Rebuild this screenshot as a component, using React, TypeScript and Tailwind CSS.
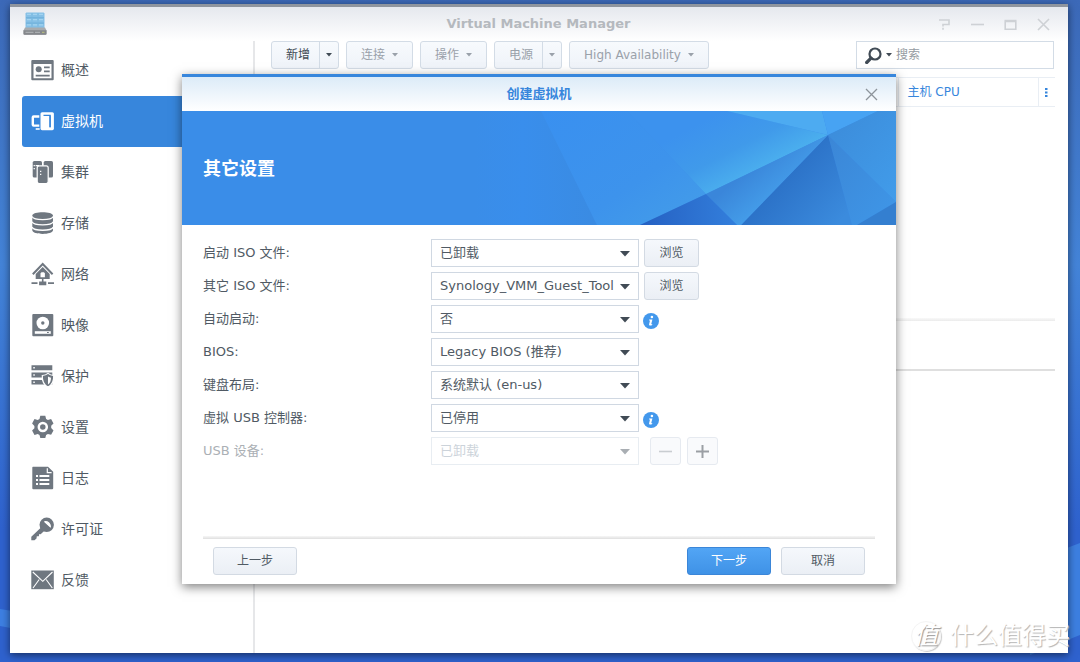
import React from 'react';

interface NavItem {
  label: string;
  icon: React.ReactNode;
  active?: boolean;
}

interface FieldProps {
  id: string;
  label: string;
  options: string[];
  disabled?: boolean;
  children?: React.ReactNode;
}

const Glyph = ({ children }: { children: React.ReactNode }) => (
  <svg viewBox="0 0 24 24" className="h-6 w-6 shrink-0" fill="currentColor" aria-hidden="true">
    {children}
  </svg>
);

const navItems: NavItem[] = [
  {
    label: '概述',
    icon: (
      <Glyph>
        <path fillRule="evenodd" d="M1.3 2h20.4a1 1 0 0 1 1 1v18.300a1 1 0 0 1-1 1H1.300a1 1 0 0 1-1-1V3a1 1 0 0 1 1-1zM2.500 6v14.200h18V6z" />
        <circle cx="7.700" cy="11.300" r="3" />
        <path d="M13 8.500h5.700v1.700H13zM13 12.600h5.700v1.700H13zM4.700 16.800h14v1.700h-14z" />
      </Glyph>
    ),
  },
  {
    label: '虚拟机',
    active: true,
    icon: (
      <Glyph>
        <path d="M8.300 7.500H2.600a.8.8 0 0 0-.8.8v7.500a.8.8 0 0 0 .8.8h5.700" fill="none" stroke="currentColor" strokeWidth="2.400" />
        <path d="M4.700 19.200h4v1.600h-4z" />
        <rect x="9.500" y="3.200" width="13.400" height="18" rx="1.600" />
        <path d="M12.500 6.400h6.600v11.800" fill="none" stroke="#3786dc" strokeWidth="1.300" />
        <path d="M18.400 6.400h1.300v11.800h-1.300z" fill="#3786dc" />
      </Glyph>
    ),
  },
  {
    label: '集群',
    icon: (
      <Glyph>
        <rect x="1.700" y="1" width="9.300" height="16.500" rx="1.600" />
        <rect x="12.700" y="1" width="9.300" height="16.500" rx="1.600" />
        <rect x="6.200" y="5.800" width="11" height="17.700" rx="2" stroke="#fff" strokeWidth="1.200" />
        <path d="M2.600 5h1.300v1.200H2.600zM4.600 5H8v1.200H4.600zM2.600 8h1.300v1.200H2.600zM9 10.800h1.300V12H9zM9 13.800h1.300V15H9z" fill="#fff" />
      </Glyph>
    ),
  },
  {
    label: '存储',
    icon: (
      <Glyph>
        <path d="M1.300 4.500C1.300 0 22 0 22 4.500v14.800c0 4.800-20.700 4.800-20.700 0z" />
        <path d="M1 5.500c2 4.200 19.300 4.200 21.300 0M1 10.800c2 4.200 19.300 4.200 21.300 0M1 16.100c2 4.200 19.300 4.200 21.300 0" fill="none" stroke="#fff" strokeWidth="1.300" />
      </Glyph>
    ),
  },
  {
    label: '网络',
    icon: (
      <Glyph>
        <path d="M1.800 12.300 11.700 2l9.900 10.300" fill="none" stroke="currentColor" strokeWidth="2" />
        <path fillRule="evenodd" d="M11.700 5 18.700 12v5H4.700v-5zM9.500 11.200v4h4.400v-4l-1-1h-2.400z" />
        <path d="M10.900 16.500h1.600v3h2.800v3.700H8.100v-3.700h2.800zM.5 20.200h6v1.800h-6zM17 20.200h6v1.800h-6z" />
      </Glyph>
    ),
  },
  {
    label: '映像',
    icon: (
      <Glyph>
        <rect x="1.300" y="1" width="21" height="22.300" rx="1" />
        <circle cx="11.800" cy="10" r="6.300" fill="#fff" />
        <circle cx="11.800" cy="10" r="1.700" />
        <path d="M3.800 18.200h16v2.600h-16z" fill="#fff" />
        <path d="M16 18.900h1.800v1.200H16z" />
      </Glyph>
    ),
  },
  {
    label: '保护',
    icon: (
      <Glyph>
        <path d="M.5 1.300h20.800v4.900H.5zM.5 8.600h20.800v4.900H.5zM.5 15.900h20.800v4.700H.5z" />
        <path d="M2.300 3h1.500v1.500H2.300zM2.300 10.300h1.500v1.500H2.300zM2.300 17.500h1.500V19H2.300z" fill="#fff" />
        <path d="M17 9.400c1.700 1.400 3.600 2 5.700 2.100.3 5.700-1.200 9.300-5.700 11.500-4.500-2.200-6-5.800-5.700-11.500 2.100-.1 4-.7 5.700-2.100z" stroke="#fff" strokeWidth="1.200" />
        <path d="M17 12.500c1 .7 2 1 3 1.200 0 3-.8 5.200-3 6.700z" fill="#fff" />
      </Glyph>
    ),
  },
  {
    label: '设置',
    icon: (
      <Glyph>
        <path d="M9.300.8h5l.8 3.200 1.800 1 3.200-.9 2.400 4.300-2.300 2.400v2.300l2.300 2.400-2.400 4.300-3.200-.9-1.800 1-.8 3.200h-5L8.500 20l-1.800-1-3.200.9-2.400-4.300 2.300-2.400v-2.300L1.100 8.400l2.400-4.300 3.200.9 1.800-1z" />
        <circle cx="11.800" cy="12" r="4" fill="none" stroke="#fff" strokeWidth="2.500" />
      </Glyph>
    ),
  },
  {
    label: '日志',
    icon: (
      <Glyph>
        <path d="M2 .8h15l5.200 5v16.500a1 1 0 0 1-1 1H2.300a1 1 0 0 1-1-1V1.800a1 1 0 0 1 .7-1z" />
        <path d="M16.300 2.300v4.300h4.300" fill="none" stroke="#fff" strokeWidth="1.200" />
        <path d="M5 9h2v2H5zM8.500 9h9.800v2H8.500zM5 13h2v2H5zM8.500 13h9.800v2H8.500zM5 17h2v2H5zM8.500 17h9.800v2H8.500z" fill="#fff" />
      </Glyph>
    ),
  },
  {
    label: '许可证',
    icon: (
      <Glyph>
        <circle cx="15.700" cy="7.800" r="7.200" />
        <path d="M10.300 10.300 13.600 13.500 9.700 17.300 8.300 17 7.800 19.200 5.800 19.200 5.500 21.500 3.500 23.200 0.300 23.200 0.300 19.800z" />
        <path d="M13.800 4.700c3.200-.3 5.600 2 5.600 5.200z" fill="#fff" stroke="#fff" strokeWidth="1.200" strokeLinejoin="round" />
      </Glyph>
    ),
  },
  {
    label: '反馈',
    icon: (
      <Glyph>
        <path d="M.3 2.500h22.500v18.700H.3z" />
        <path d="m1.800 4 10 9.300L21.500 4M2 20l6.200-8.500M21.300 20 15.200 11.500" fill="none" stroke="#fff" strokeWidth="1.100" />
      </Glyph>
    ),
  },
];

const Caret = () => (
  <svg viewBox="0 0 6 4" className="h-1 w-[6px]" fill="currentColor" aria-hidden="true">
    <path d="M0 0h6L3 3.500z" />
  </svg>
);

const toolButton = 'flex h-7 items-center rounded-[3px] border border-[#d3dce6] bg-linear-to-b from-[#f7fafd] to-[#eff3f9] text-[#9aa1aa]';

const MenuButton = ({ label }: { label: string }) => (
  <button disabled className={`${toolButton} gap-[7px] px-[14px]`}>
    {label}
    <Caret />
  </button>
);

const SplitButton = ({ label, disabled }: { label: string; disabled?: boolean }) => (
  <div className={toolButton}>
    <button disabled={disabled} className={`h-full pr-[9px] pl-[14px] ${disabled ? '' : 'text-[#414b55]'}`}>{label}</button>
    <button disabled={disabled} aria-label={`${label}菜单`} className={`flex h-full w-[19px] items-center justify-center border-l border-[#d3dce6] ${disabled ? '' : 'text-[#414b55]'}`}>
      <Caret />
    </button>
  </div>
);

const Field = ({ id, label, options, disabled, children }: FieldProps) => (
  <div className="flex h-7 items-center">
    <label htmlFor={id} className={`w-[228px] shrink-0 text-[13px] ${disabled ? 'text-[#abb0b5]' : ''}`}>{label}</label>
    <div className="relative mr-[5px] w-52 shrink-0">
      <select
        id={id}
        disabled={disabled}
        className={`block h-7 w-full appearance-none border bg-white pr-6 pl-2 text-[13px] opacity-100 ${disabled ? 'border-[#e8edf2] text-[#ccd3da]' : 'border-[#d0d8e2]'}`}
      >
        {options.map((option) => (
          <option key={option}>{option}</option>
        ))}
      </select>
      <svg viewBox="0 0 10 6" className={`pointer-events-none absolute top-3 right-[9px] h-[6px] w-[10px] ${disabled ? 'text-[#a9aeb3]' : 'text-[#414b55]'}`} fill="currentColor" aria-hidden="true">
        <path d="M0 0h10L5 5.500z" />
      </svg>
    </div>
    {children}
  </div>
);

const plainButton = 'rounded-[3px] border border-[#d3dae3] bg-linear-to-b from-[#f5f8fc] to-[#ebeff5]';

const BrowseButton = () => <button className={`${plainButton} h-7 w-[55px]`}>浏览</button>;

const InfoButton = () => (
  <button aria-label="说明" className="mt-1 -ml-px h-4 w-4">
    <svg viewBox="0 0 16 16" className="h-4 w-4" aria-hidden="true">
      <circle cx="8" cy="8" r="8" fill="#4398ec" />
      <circle cx="8.900" cy="4" r="1.300" fill="#fff" />
      <path d="M6.200 6.500h3.200L8.200 11.300l1.100-.2-.2.900c-1 .8-3.400 1.100-3-.8l.9-3.800H6z" fill="#fff" />
    </svg>
  </button>
);

const Banner = () => (
  <svg viewBox="0 0 714 114" preserveAspectRatio="none" className="col-start-1 row-start-1 h-full w-full" aria-hidden="true">
    <defs>
      <linearGradient id="soft" x1="0" y1="0" x2="1" y2="0">
        <stop offset="0" stopColor="#3a8de8" />
        <stop offset=".4" stopColor="#398eec" />
        <stop offset="1" stopColor="#3a8be2" />
      </linearGradient>
      <linearGradient id="mid" x1="0" y1="0" x2="1" y2="1">
        <stop offset="0" stopColor="#3990f0" />
        <stop offset=".6" stopColor="#3d93ec" />
        <stop offset="1" stopColor="#449ee8" />
      </linearGradient>
      <linearGradient id="glow" gradientUnits="userSpaceOnUse" x1="540" y1="0" x2="577" y2="70">
        <stop offset="0" stopColor="#3c92ee" />
        <stop offset=".5" stopColor="#409aea" />
        <stop offset="1" stopColor="#4eb5ef" />
      </linearGradient>
      <linearGradient id="dark" gradientUnits="userSpaceOnUse" x1="595" y1="60" x2="655" y2="114">
        <stop offset="0" stopColor="#2a6fc5" />
        <stop offset="1" stopColor="#3b8bdd" />
      </linearGradient>
      <linearGradient id="wedge" x1="0" y1="0" x2="1" y2="0">
        <stop offset="0" stopColor="#2560c2" />
        <stop offset="1" stopColor="#337fdc" />
      </linearGradient>
      <linearGradient id="blade" gradientUnits="userSpaceOnUse" x1="565" y1="60" x2="590" y2="90">
        <stop offset="0" stopColor="#3a86da" />
        <stop offset="1" stopColor="#449de9" />
      </linearGradient>
      <linearGradient id="side" x1="0" y1="0" x2="1" y2="1">
        <stop offset="0" stopColor="#3c8bd9" />
        <stop offset="1" stopColor="#419cea" />
      </linearGradient>
      <linearGradient id="lower" x1="0" y1="0" x2="1" y2="1">
        <stop offset="0" stopColor="#3b86d6" />
        <stop offset="1" stopColor="#3f97e8" />
      </linearGradient>
    </defs>
    <path d="M0 0h714v114H0z" fill="#3a8de8" />
    <path d="M292 0h67l56 114H292z" fill="url(#soft)" />
    <path d="M359 0h86l79 83-66 31h-43z" fill="url(#mid)" />
    <path d="M445 0h100l101 24-122 59z" fill="url(#glow)" />
    <path d="M545 0h95l6 24z" fill="#4dabf1" />
    <path d="M640 0h56l-50 24z" fill="#47a3f3" />
    <path d="M696 0h18v91l-68-67z" fill="url(#side)" />
    <path d="m646 24 68 67-39 23h-5z" fill="url(#lower)" />
    <path d="M714 91v23h-39z" fill="#347fd0" />
    <path d="m646 24 24 90H559z" fill="url(#dark)" />
    <path d="m646 24-87 90h-4l-31-31z" fill="url(#blade)" />
    <path d="m524 83 31 31h-97z" fill="url(#wedge)" />
  </svg>
);

const AppLogo = () => (
  <svg viewBox="0 0 24 24" className="h-6 w-6" aria-hidden="true">
    <path d="M2.500 1.500 3.300.5h17.400l.8 1V17h-19z" fill="#86c0e6" />
    <path d="M3 5.800h18M3 11.100h18" stroke="#6aabd8" strokeWidth=".9" />
    <path d="M9 1v16M15 1v16" stroke="#7ab8e1" strokeWidth=".6" />
    <path d="M4 2.300h4M10 2.300h4M16 2.300h4M4 7.600h4M10 7.600h4M16 7.600h4M4 12.900h4M10 12.900h4M16 12.900h4" stroke="#a3d3f0" strokeWidth="1.300" />
    <path d="m2 15.500-1.500 3v3.300a1 1 0 0 0 1 1h21a1 1 0 0 0 1-1v-3.300l-1.500-3z" fill="#a8abae" />
    <path d="M.5 18.300h23v3.500a1 1 0 0 1-1 1h-21a1 1 0 0 1-1-1z" fill="#84878b" />
    <path d="M2.500 20.300h8M12 20.300h5" stroke="#b4b7ba" strokeWidth="1" />
    <path d="M19 20.300h2.500" stroke="#bcc47e" strokeWidth="1" />
  </svg>
);

const windowButtons = [
  { label: '帮助', path: 'M1 2h10v4.500H5v2M5 9.800v2' },
  { label: '最小化', path: 'M0 6.500h13' },
  { label: '最大化', path: 'M1.200 3.500h10.600v7.800H1.200zM.5 2.500h12' },
  { label: '关闭', path: 'm1 1 11 11M12 1 1 12' },
];

const CreateVmDialog = () => (
  <section role="dialog" aria-labelledby="dialog-title" className="w-[714px] max-w-full border-t-[3px] border-[#3786dc] bg-white shadow-[0_3px_10px_rgba(0,0,0,0.5)]">
    <header className="grid h-[34px] grid-cols-[1fr_auto_1fr] items-center bg-linear-to-b from-[#dcebf8] to-white px-[18px]">
      <h2 id="dialog-title" className="col-start-2 text-[13px] font-bold text-[#3786dc]">创建虚拟机</h2>
      <button aria-label="关闭" className="justify-self-end">
        <svg viewBox="0 0 13 13" className="h-[13px] w-[13px]" fill="none" stroke="#8d949b" strokeWidth="1.300" aria-hidden="true">
          <path d="m1 1 11 11M12 1 1 12" />
        </svg>
      </button>
    </header>
    <div className="grid h-[114px] items-center">
      <Banner />
      <h3 className="z-10 col-start-1 row-start-1 px-[21px] pt-[2px] text-lg font-bold text-white">其它设置</h3>
    </div>
    <form onSubmit={(e) => e.preventDefault()}>
      <div className="flex flex-col gap-[5px] px-[21px] pt-[14px] pb-[71px]">
        <Field id="boot-iso" label="启动 ISO 文件:" options={['已卸载']}>
          <BrowseButton />
        </Field>
        <Field id="extra-iso" label="其它 ISO 文件:" options={['Synology_VMM_Guest_Tool']}>
          <BrowseButton />
        </Field>
        <Field id="autostart" label="自动启动:" options={['否', '是']}>
          <InfoButton />
        </Field>
        <Field id="bios" label="BIOS:" options={['Legacy BIOS (推荐)', 'UEFI']} />
        <Field id="keyboard" label="键盘布局:" options={['系统默认 (en-us)']} />
        <Field id="usb-controller" label="虚拟 USB 控制器:" options={['已停用']}>
          <InfoButton />
        </Field>
        <Field id="usb-device" label="USB 设备:" options={['已卸载']} disabled>
          <div className="ml-[6px] flex gap-[6px]">
            <button disabled aria-label="移除" className="flex h-7 w-[31px] items-center justify-center rounded-[3px] border border-[#e6eaf0] bg-[#f9fafc]">
              <svg viewBox="0 0 13 13" className="h-[13px] w-[13px]" fill="#c9cdd1" aria-hidden="true">
                <path d="M0 5.700h13v1.600H0z" />
              </svg>
            </button>
            <button disabled aria-label="添加" className="flex h-7 w-[31px] items-center justify-center rounded-[3px] border border-[#e6eaf0] bg-[#f9fafc]">
              <svg viewBox="0 0 13 13" className="h-[13px] w-[13px]" fill="#9b9fa4" aria-hidden="true">
                <path d="M0 5.500h13v2H0zM5.500 0h2v13h-2z" />
              </svg>
            </button>
          </div>
        </Field>
      </div>
      <footer className="mx-[21px]">
        <div className="h-[3px] bg-linear-to-b from-[#f7f7f7] to-[#dfdfdf]" />
        <div className="flex gap-[10px] px-[10px] pt-2 pb-[9px]">
          <button className={`${plainButton} mr-auto h-7 w-[84px]`}>上一步</button>
          <button className="h-7 w-[84px] rounded-[3px] border border-[#3b86d8] bg-linear-to-b from-[#52a5f5] to-[#3f92e6] text-white">下一步</button>
          <button className={`${plainButton} h-7 w-[84px]`}>取消</button>
        </div>
      </footer>
    </form>
  </section>
);

const App = () => {
  return (
    <div className="relative flex min-h-screen flex-col overflow-hidden bg-linear-to-b from-[#3c69b8] via-[#4484d8] via-40% to-[#2f62ce] to-80% pt-1 pr-3 pb-[9px] pl-[10px] font-['DejaVu_Sans','Noto_Sans_CJK_SC',sans-serif] text-xs text-[#505a64]">
      <svg viewBox="0 0 1080 662" preserveAspectRatio="none" className="absolute inset-0 h-full w-full" aria-hidden="true">
        <path d="M0 609 100 625V645L0 626z" fill="#3d7fe2" />
        <path d="M1030 562 1080 543V635L1030 655z" fill="#3d7fe0" />
      </svg>

      <div className="relative flex flex-1 flex-col bg-white shadow-[0_2px_8px_rgba(0,0,0,0.55)]">
        <div className="h-[3px] bg-[#8f959e]" />
        <header className="grid h-[34px] grid-cols-[1fr_auto_1fr] items-center bg-linear-to-b from-[#e5e8ee] to-white pr-[18px] pl-[13px]">
          <AppLogo />
          <h1 className="pl-1 text-[13px] font-bold text-[#b5b9be]">Virtual Machine Manager</h1>
          <div className="flex gap-5 justify-self-end">
            {windowButtons.map(({ label, path }) => (
              <button key={label} aria-label={label} className="h-[13px] w-[13px]">
                <svg viewBox="0 0 13 13" className="h-[13px] w-[13px]" fill="none" stroke="#ced1d5" strokeWidth="1.600" aria-hidden="true">
                  <path d={path} />
                </svg>
              </button>
            ))}
          </div>
        </header>

        <div className="flex flex-1">
          <nav className="w-[243px] shrink-0 pt-1 pl-3">
            {navItems.map(({ label, icon, active }) => (
              <a
                key={label}
                href="#"
                aria-current={active ? 'page' : undefined}
                className={`flex h-[51px] items-center gap-[6px] rounded-[3px] pb-[2px] pl-[9px] text-sm ${active ? 'bg-[#3786dc] text-white' : 'text-[#505a64]'}`}
              >
                <span className={active ? '' : 'text-[#6f7780]'}>{icon}</span>
                {label}
              </a>
            ))}
          </nav>

          <main className="flex min-w-0 flex-1 flex-col border-l-2 border-[#e6e7e9] pr-[13px] pl-4">
            <div className="flex gap-[7px] whitespace-nowrap">
              <SplitButton label="新增" />
              <MenuButton label="连接" />
              <MenuButton label="操作" />
              <SplitButton label="电源" disabled />
              <MenuButton label="High Availability" />
              <label className="mr-px ml-auto flex h-7 w-[198px] items-center gap-1 border border-[#d3dce6] bg-white pl-2">
                <svg viewBox="0 0 17 17" className="h-[17px] w-[17px] shrink-0" fill="none" stroke="#414b55" aria-hidden="true">
                  <circle cx="10" cy="7" r="5.500" strokeWidth="2.200" />
                  <path d="M6 11.200 1.700 15.500" strokeWidth="3.200" strokeLinecap="round" />
                </svg>
                <span className="text-[#414b55]"><Caret /></span>
                <input type="text" placeholder="搜索" aria-label="搜索" className="h-full w-full min-w-0 outline-none placeholder:text-[#959ba2]" />
              </label>
            </div>

            <table className="mt-2 w-full table-fixed border-collapse text-[#3786dc]">
              <thead>
                <tr className="h-[29px] border-y border-[#e9eef4]">
                  <td />
                  <th scope="col" className="w-[140px] border-l border-[#e9eef4] pl-[9px] text-left font-normal">主机 CPU</th>
                  <td className="w-[17px] border-l border-[#e9eef4]">
                    <button aria-label="列" className="flex w-full justify-center">
                      <svg viewBox="0 0 3 9" className="h-[9px] w-[3px]" fill="#3786dc" aria-hidden="true">
                        <path d="M0 0h2.500v2H0zM0 3.500h2.500v2H0zM0 7h2.500v2H0z" />
                      </svg>
                    </button>
                  </td>
                </tr>
              </thead>
            </table>
            <div className="flex-1" />
            <div className="h-[3px] bg-linear-to-b from-[#f9f9f9] to-[#ebebeb]" />
            <div className="h-12" />
            <div className="h-[284px] border-t-2 border-[#dfdfdf]" />
          </main>
        </div>

        <div className="absolute inset-0 flex items-start justify-center pt-[70px]">
          <CreateVmDialog />
        </div>
      </div>

      <div className="pointer-events-none absolute right-[10px] bottom-[10px] flex items-center gap-[9px] whitespace-nowrap text-white">
        <span className="flex h-[30px] w-[30px] items-center justify-center rounded-full border border-[#f4f4f4] text-2xl leading-none italic shadow-[1px_1px_1px_#ccc] [text-shadow:1px_1px_1px_#999]">值</span>
        <span className="text-2xl leading-8 [text-shadow:1px_1px_1px_#b4b4b4]">什么值得买</span>
      </div>
    </div>
  );
};

export default App;
